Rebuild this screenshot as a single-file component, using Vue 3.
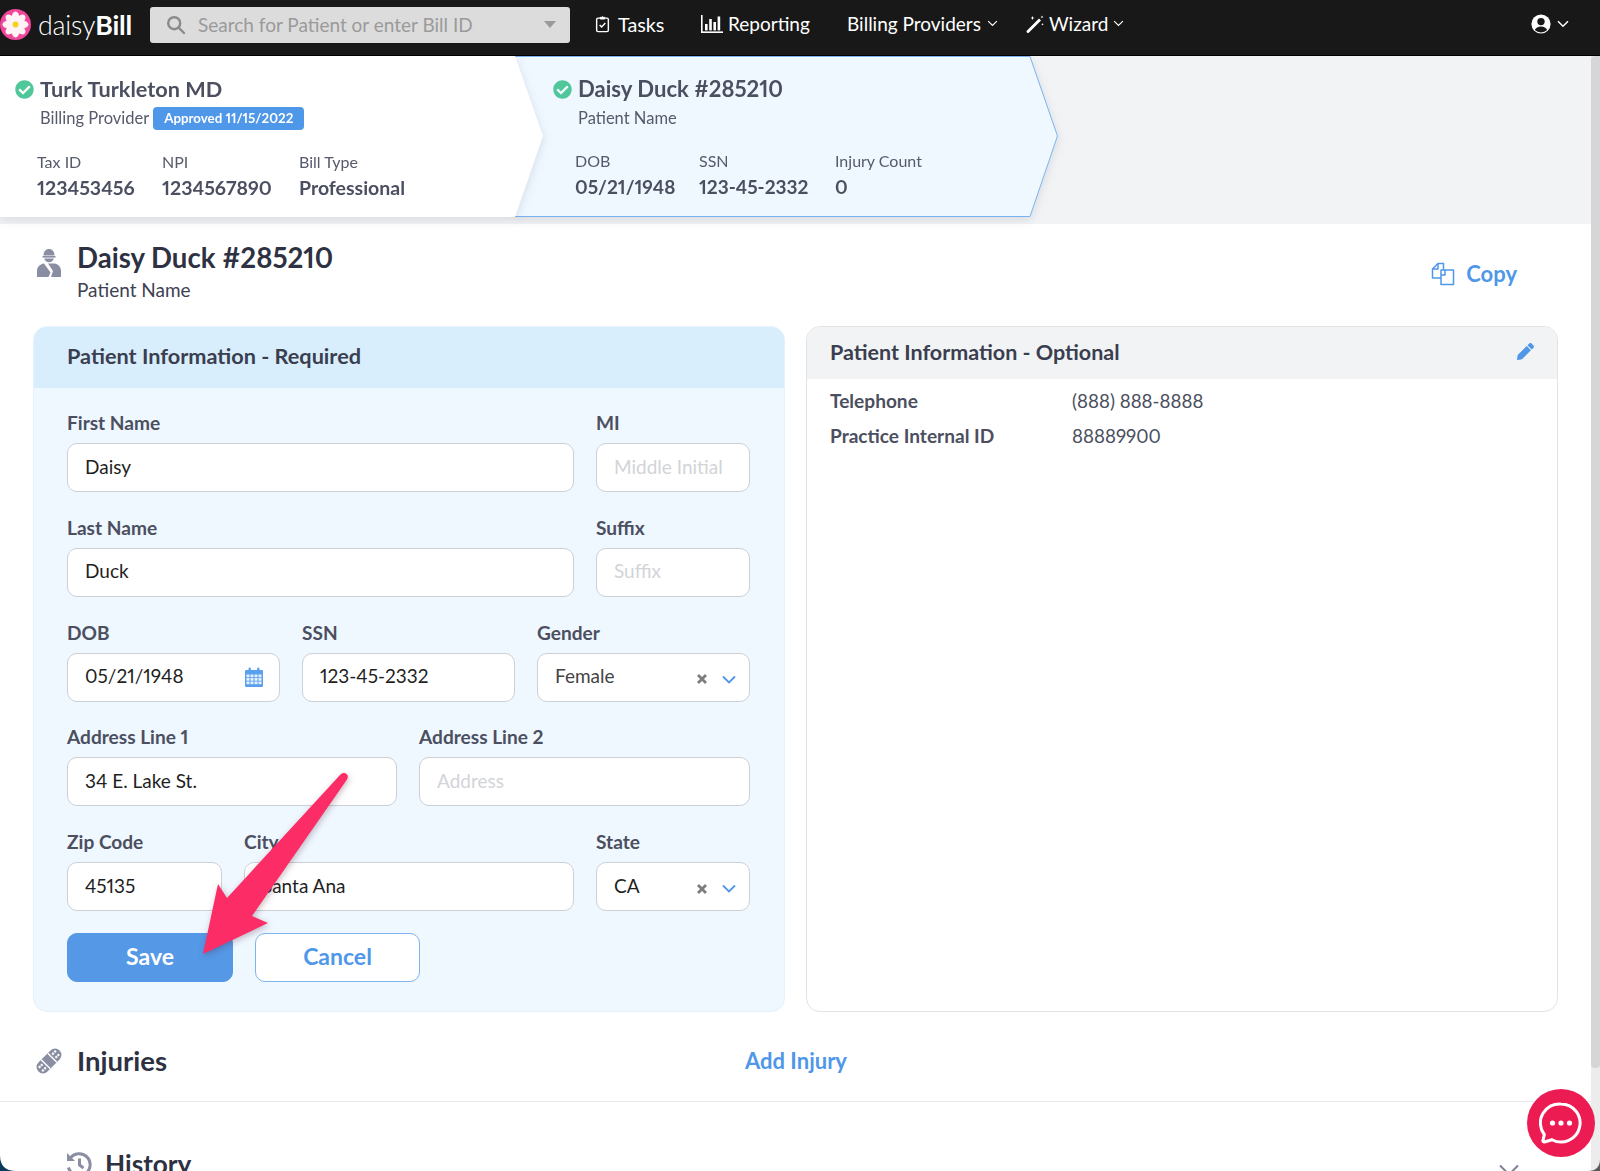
<script setup>
const checkPath = 'M504 256c0 136.967-111.033 248-248 248S8 392.967 8 256 119.033 8 256 8s248 111.033 248 248zM227.314 387.314l184-184c6.248-6.248 6.248-16.379 0-22.627l-22.627-22.627c-6.248-6.249-16.379-6.249-22.628 0L216 308.118l-70.059-70.059c-6.248-6.248-16.379-6.248-22.628 0l-22.627 22.627c-6.248 6.248-6.248 16.379 0 22.627l104 104c6.249 6.249 16.379 6.249 22.628.001z'
const tabs = [
  {
    cls: 'tab-provider', title: 'Turk Turkleton MD', sub: 'Billing Provider', badge: 'Approved 11/15/2022',
    stats: [
      { label: 'Tax ID', value: '123453456', w: 125 },
      { label: 'NPI', value: '1234567890', w: 137 },
      { label: 'Bill Type', value: 'Professional', w: 130 },
    ],
  },
  {
    cls: 'tab-patient', title: 'Daisy Duck #285210', sub: 'Patient Name',
    stats: [
      { label: 'DOB', value: '05/21/1948', w: 124 },
      { label: 'SSN', value: '123-45-2332', w: 136 },
      { label: 'Injury Count', value: '0', w: 120 },
    ],
  },
]
const rows = [
  { cls: 'r-name', fields: [
    { label: 'First Name', value: 'Daisy' },
    { label: 'MI', placeholder: 'Middle Initial' },
  ] },
  { cls: 'r-name', fields: [
    { label: 'Last Name', value: 'Duck' },
    { label: 'Suffix', placeholder: 'Suffix' },
  ] },
  { cls: 'r-three', fields: [
    { label: 'DOB', value: '05/21/1948', calendar: true },
    { label: 'SSN', value: '123-45-2332' },
    { label: 'Gender', value: 'Female', select: true, soft: true },
  ] },
  { cls: 'r-addr', fields: [
    { label: 'Address Line 1', value: '34 E. Lake St.' },
    { label: 'Address Line 2', placeholder: 'Address' },
  ] },
  { cls: 'r-city', fields: [
    { label: 'Zip Code', value: '45135' },
    { label: 'City', value: 'Santa Ana' },
    { label: 'State', value: 'CA', select: true },
  ] },
]
</script>

<template>
  <div class="app">
    <header class="nav">
      <div class="logo">
        <svg class="flower" viewBox="0 0 32 32" width="31" height="31">
          <circle cx="16" cy="16" r="16" fill="#f0479b" />
          <g fill="#fff3f6">
            <ellipse v-for="a in [0, 45, 90, 135, 180, 225, 270, 315]" :key="a" cx="16" cy="8.6" rx="3.9" ry="6" :transform="`rotate(${a} 16 16)`" />
          </g>
          <circle cx="16" cy="16" r="3" fill="#f7d21c" />
        </svg>
        <span class="brand">daisy<b>Bill</b></span>
      </div>
      <div class="search">
        <svg viewBox="0 0 20 20" width="20" height="20" fill="none" stroke="#8a8a8a" stroke-width="2.4"><circle cx="8.2" cy="8.2" r="6" /><path d="M12.6 12.6 18 18" stroke-linecap="round" /></svg>
        <span class="search-text">Search for Patient or enter Bill ID</span>
        <i class="search-caret"></i>
      </div>
      <nav class="links">
        <a class="link l-tasks">
          <svg viewBox="0 0 16 20" width="15" height="18" fill="none" stroke="#fff" stroke-width="1.6"><rect x="1.5" y="3.5" width="13" height="15" rx="1.6" /><path d="M5.5 3.5V2.6h1.4a1.2 1.2 0 0 1 2.2 0h1.4v1.9h-5z" fill="#fff" stroke-width="1" /><path d="m4.8 11 2.3 2.4 4-4.4" /></svg>
          Tasks
        </a>
        <a class="link l-report">
          <svg viewBox="0 0 22 18" width="22" height="18" fill="#fff"><rect x="0" y="0" width="1.6" height="18" /><rect x="0" y="16.4" width="22" height="1.6" /><rect x="4" y="9" width="2.6" height="6.4" /><rect x="8.2" y="4" width="2.6" height="11.4" /><rect x="12.4" y="7" width="2.6" height="8.4" /><rect x="16.6" y="1.5" width="2.6" height="13.9" /></svg>
          Reporting
        </a>
        <a class="link l-billing">
          Billing Providers
          <svg viewBox="0 0 12 8" width="11" height="7" fill="none" stroke="#fff" stroke-width="1.3"><path d="m1 1.2 5 5 5-5" /></svg>
        </a>
        <a class="link l-wizard">
          <svg viewBox="0 0 18 18" width="18" height="18" fill="#fff"><path d="M13 3.6 15 5.6 3 17.6a1.2 1.2 0 0 1-2-2z" /><path d="m6.5 1 .6 1.4L8.5 3l-1.4.6-.6 1.4-.6-1.4L4.5 3l1.4-.6zM16 .6l.4 1 1 .4-1 .4-.4 1-.4-1-1-.4 1-.4zM16.5 8l.4.9.9.4-.9.4-.4.9-.4-.9-.9-.4.9-.4z" /></svg>
          Wizard
          <svg viewBox="0 0 12 8" width="11" height="7" fill="none" stroke="#fff" stroke-width="1.3"><path d="m1 1.2 5 5 5-5" /></svg>
        </a>
      </nav>
      <div class="user">
        <svg viewBox="0 0 20 20" width="20" height="20"><circle cx="10" cy="10" r="9.6" fill="#fff" /><circle cx="10" cy="7.6" r="3.7" fill="#181818" /><path d="M3.8 16a6.6 5.4 0 0 1 12.4 0 9 9 0 0 1-12.4 0z" fill="#181818" /></svg>
        <svg viewBox="0 0 12 8" width="12" height="8" fill="none" stroke="#fff" stroke-width="1.5"><path d="m1 1.2 5 5 5-5" /></svg>
      </div>
    </header>

    <div class="below">
      <div class="page">
        <section class="tabs">
          <article v-for="tab in tabs" :key="tab.cls" class="tab" :class="tab.cls">
            <svg v-if="tab.cls === 'tab-patient'" class="tab-line" viewBox="0 0 543 161" width="543" height="161" fill="none">
              <path d="M0 .5H515L542.500 80 515 160.500H0" stroke="#79b1f1" stroke-width="1" />
            </svg>
            <div class="tab-inner">
              <div class="tab-title">
                <svg viewBox="0 0 512 512" width="19" height="19" fill="#4fc79a"><path :d="checkPath" /></svg>
                <span>{{ tab.title }}</span>
              </div>
              <div class="tab-sub">
                <span>{{ tab.sub }}</span>
                <span v-if="tab.badge" class="badge">{{ tab.badge }}</span>
              </div>
              <div class="stats">
                <div v-for="s in tab.stats" :key="s.label" class="stat" :style="{ width: s.w + 'px' }">
                  <div class="stat-label">{{ s.label }}</div>
                  <div class="stat-value">{{ s.value }}</div>
                </div>
              </div>
            </div>
          </article>
        </section>

        <section class="heading">
          <svg class="h-icon" viewBox="0 0 26 30" width="26" height="30" fill="#8a8ea3">
            <path d="M7.5 7.5C7.5 3.6 9.8 1 13 1s5.500 2.600 5.500 6.500z" />
            <path d="M6.500 8h13v1.600h-13z" />
            <path d="M8.200 10.600h9.600a5 5 0 0 1-9.600 0z" />
            <path d="M1 29v-6c0-4.500 3.500-7 7-7.500l6.500 9-2 4.500zM15 29l2-6-5-7.500h6c4.500.5 7 3.500 7 7.500v6z" />
          </svg>
          <div class="h-text">
            <h1>Daisy Duck #285210</h1>
            <p>Patient Name</p>
          </div>
          <a class="copy">
            <svg viewBox="0 0 24 24" width="24" height="24" fill="none" stroke="#4f97e8" stroke-width="1.500" stroke-linejoin="round"><path d="M10 16H1.500V7L7 1.500h5.500V8" /><path d="M1.500 7H7V1.500" /><path d="M10 8h12.500v14.500H10z" fill="#fff" /><path d="M14 8v5h-4" /></svg>
            Copy
          </a>
        </section>

        <section class="cards">
          <div class="card card-req">
            <div class="req-head">Patient Information - Required</div>
            <div class="req-body">
              <div v-for="(row, i) in rows" :key="i" class="row" :class="row.cls">
                <div v-for="f in row.fields" :key="f.label" class="field">
                  <label>{{ f.label }}</label>
                  <div class="input" :class="{ ph: f.placeholder, soft: f.soft }">
                    <span>{{ f.value || f.placeholder }}</span>
                    <svg v-if="f.calendar" class="cal" viewBox="0 0 20 20" width="20" height="20">
                      <path d="M2 3h16a1 1 0 0 1 1 1v15a1 1 0 0 1-1 1H2a1 1 0 0 1-1-1V4a1 1 0 0 1 1-1z" fill="#5aa0ee" />
                      <rect x="4.500" y="0.500" width="2.400" height="5" rx="1.200" fill="#5aa0ee" />
                      <rect x="13.100" y="0.500" width="2.400" height="5" rx="1.200" fill="#5aa0ee" />
                      <g fill="#e6f1fd">
                        <template v-for="y in [7.5, 11, 14.500]" :key="y">
                          <rect v-for="x in [2.500, 6.500, 10.500, 14.500]" :key="x" :x="x" :y="y" width="3" height="2.700" />
                        </template>
                      </g>
                    </svg>
                    <template v-if="f.select">
                      <svg class="x" viewBox="0 0 10 10" width="10" height="10" stroke="#7d7d7d" stroke-width="2.800"><path d="m1 1 8 8M9 1l-8 8" /></svg>
                      <svg class="down" viewBox="0 0 14 9" width="14" height="9" fill="none" stroke="#4f97e8" stroke-width="1.800"><path d="m1 1.500 6 6 6-6" /></svg>
                    </template>
                  </div>
                </div>
              </div>
              <div class="actions">
                <button class="btn save" type="button">Save</button>
                <button class="btn cancel" type="button">Cancel</button>
              </div>
            </div>
          </div>

          <div class="card card-opt">
            <div class="opt-head">
              <span>Patient Information - Optional</span>
              <svg viewBox="0 0 512 512" width="17" height="17" fill="#4f97e8"><path d="M497.900 142.100l-46.100 46.100c-4.700 4.700-12.300 4.700-17 0l-111-111c-4.700-4.700-4.700-12.300 0-17l46.100-46.100c18.700-18.700 49.100-18.700 67.900 0l60.100 60.100c18.800 18.700 18.800 49.100 0 67.900zM284.200 99.800L21.600 362.400.4 483.900c-2.900 16.400 11.400 30.600 27.800 27.800l121.500-21.300 262.600-262.600c4.700-4.700 4.700-12.300 0-17l-111-111c-4.800-4.700-12.400-4.700-17.100 0z" /></svg>
            </div>
            <dl class="opt-list">
              <div><dt>Telephone</dt><dd>(888) 888-8888</dd></div>
              <div><dt>Practice Internal ID</dt><dd>88889900</dd></div>
            </dl>
          </div>
        </section>

        <section class="injuries">
          <svg viewBox="0 0 28 28" width="30" height="30">
            <g transform="rotate(-45 14 14)">
              <rect x="0" y="8" width="28" height="12" rx="6" fill="#8a8ea3" />
              <rect x="9" y="8" width="1.300" height="12" fill="#fff" />
              <rect x="17.700" y="8" width="1.300" height="12" fill="#fff" />
              <g fill="#fff">
                <rect x="2.800" y="10.800" width="2" height="2" /><rect x="5.600" y="10.800" width="2" height="2" />
                <rect x="2.800" y="15.200" width="2" height="2" /><rect x="5.600" y="15.200" width="2" height="2" />
                <rect x="20.400" y="10.800" width="2" height="2" /><rect x="23.200" y="10.800" width="2" height="2" />
                <rect x="20.400" y="15.200" width="2" height="2" /><rect x="23.200" y="15.200" width="2" height="2" />
              </g>
            </g>
          </svg>
          <h2>Injuries</h2>
          <a class="add">Add Injury</a>
        </section>

        <section class="history">
          <svg viewBox="0 0 28 28" width="28" height="28" fill="none" stroke="#8a8ea3" stroke-width="3">
            <path d="M5 8.500a11 11 0 1 1-1.500 9" />
            <path d="M2 3v8h8z" fill="#8a8ea3" stroke="none" />
            <path d="M14.500 8.500V15l4 3" />
          </svg>
          <h2>History</h2>
          <svg class="hist-chev" viewBox="0 0 20 12" width="20" height="12" fill="none" stroke="#7d8296" stroke-width="2"><path d="m1 1.500 9 9 9-9" /></svg>
        </section>
      </div>
      <div class="scrollbar"><div class="thumb"></div></div>
    </div>

    <svg class="arrow" viewBox="0 0 160 200" width="160" height="200">
      <path d="M142.500 2.500C144.500.5 147.500.5 149 2.500 150.200 4 150 5.800 149 7.500L54 144 70 151 5 182 20 112 29 126z" fill="#fb2c66" />
    </svg>

    <div class="chat">
      <svg viewBox="0 0 44 44" width="44" height="44" fill="none">
        <path d="M22 3a19 19 0 1 1-9 35.700L5.500 41a1.200 1.200 0 0 1-1.500-1.500l1.300-6A19 19 0 0 1 22 3z" stroke="#fff" stroke-width="3" />
        <circle cx="13.500" cy="22" r="2.600" fill="#fff" />
        <circle cx="22" cy="22" r="2.600" fill="#fff" />
        <circle cx="30.500" cy="22" r="2.600" fill="#fff" />
      </svg>
    </div>

    <svg class="corner corner-l" viewBox="0 0 16 16" width="16" height="16"><path d="M0 0Q0 16 16 16H0z" fill="#0c3a5c" /></svg>
    <svg class="corner corner-r" viewBox="0 0 12 12" width="12" height="12"><path d="M12 0Q12 12 0 12H12z" fill="#5a5a5a" /></svg>
  </div>
</template>

<style scoped>
.app {
  position: relative;
  width: 1600px;
  height: 1171px;
  overflow: hidden;
  background: #fff;
  font-family: Lato, "Liberation Sans", sans-serif;
  font-variant-numeric: proportional-nums;
  color: #2d3142;
}
.nav {
  height: 55px;
  background: #181818;
  border-bottom: 1px solid #000;
  display: flex;
  align-items: center;
  color: #fff;
  box-sizing: content-box;
}
.logo {
  display: flex;
  align-items: center;
  width: 150px;
  flex: none;
}
.flower { margin-top: -6px; }
.brand {
  margin-left: 7px;
  margin-top: -6px;
  font-size: 26.8px;
  font-weight: 300;
  color: #fff;
  letter-spacing: -0.2px;
}
.brand b { font-weight: 700; }
.search {
  width: 420px;
  height: 36px;
  margin-top: -6px;
  background: #dcdcdc;
  border-radius: 3px;
  display: flex;
  align-items: center;
  padding: 0 14px 0 16px;
  box-sizing: border-box;
  flex: none;
}
.search-text {
  margin-left: 12px;
  font-size: 19px;
  color: #9a9a9a;
  flex: 1;
  white-space: nowrap;
}
.search-caret {
  width: 0;
  height: 0;
  border-left: 6px solid transparent;
  border-right: 6px solid transparent;
  border-top: 7px solid #9a9a9a;
}
.links {
  display: flex;
  align-items: center;
  margin-top: -8px;
  margin-left: 25px;
  font-size: 19px;
}
.link {
  display: flex;
  align-items: center;
  white-space: nowrap;
}
.l-tasks { gap: 8px; width: 106px; font-size: 19.8px; }
.l-report { gap: 5px; width: 147px; }
.l-billing { gap: 6px; width: 180px; margin-left: -1px; }
.l-wizard { gap: 5px; margin-left: -1px; }
.user {
  margin-left: auto;
  margin-right: 31px;
  margin-top: -8px;
  display: flex;
  align-items: center;
  gap: 6px;
}
.below {
  display: flex;
  height: 1115px;
}
.page {
  width: 1591px;
  flex: none;
  overflow: hidden;
}
.scrollbar {
  width: 9px;
  flex: none;
  background: #ececec;
}
.thumb {
  height: 1012px;
  background: #d6d6d6;
  border-radius: 4px 0 4px 4px;
}
.tabs {
  height: 168px;
  background: #f2f3f5;
  display: flex;
  align-items: flex-start;
}
.tab {
  position: relative;
  width: 543px;
  height: 161px;
  flex: none;
  box-sizing: border-box;
  filter: drop-shadow(0 3px 5px rgba(60, 70, 90, 0.14));
}
.tab-provider {
  z-index: 2;
}
.tab-provider .tab-inner {
  background: #fff;
  clip-path: polygon(0 0, 515px 0, 543px 80px, 515px 161px, 0 161px);
  padding: 23px 0 0 37px;
}
.tab-patient {
  z-index: 1;
  margin-left: -28px;
}
.tab-patient .tab-inner {
  background: #eff7ff;
  clip-path: polygon(0 0, 515px 0, 543px 80px, 515px 161px, 0 161px);
  padding: 23px 0 0 60px;
}
.tab-inner {
  height: 161px;
  box-sizing: border-box;
}
.tab-line {
  position: absolute;
  left: 0;
  top: 0;
  z-index: 2;
}
.tab-title {
  display: flex;
  align-items: center;
  gap: 6px;
  margin-left: -22px;
  font-size: 21.7px;
  line-height: 20px;
  font-weight: 700;
  color: #4b4f60;
  height: 20px;
}
.tab-patient .tab-title { font-size: 22.1px; }
.tab-sub {
  display: flex;
  align-items: center;
  margin: 7px 0 0 3px;
  font-size: 16.5px;
  color: #565a6b;
  height: 24px;
}
.badge {
  margin-left: 4px;
  background: #4f97e8;
  color: #fff;
  font-size: 13.3px;
  font-weight: 700;
  height: 23px;
  line-height: 23px;
  padding: 0 11px;
  border-radius: 4px;
}
.stats {
  display: flex;
  margin-top: 22px;
}
.tab-patient .stats { margin-top: 21px; }
.stat-label {
  font-size: 16px;
  line-height: 20px;
  color: #565a6b;
}
.stat-value {
  margin-top: 6px;
  font-size: 19.5px;
  line-height: 20px;
  font-weight: 700;
  color: #4b4f60;
  white-space: nowrap;
}
.tab-patient .stat-value { font-size: 19px; }
.heading {
  display: flex;
  height: 102px;
  box-sizing: border-box;
  padding: 19px 74px 0 36px;
  align-items: flex-start;
}
.h-icon { margin-top: 5px; flex: none; }
.h-text { margin-left: 15px; }
.h-text h1 {
  margin: 0;
  font-size: 27.6px;
  line-height: 30px;
  font-weight: 700;
  color: #2d3142;
}
.h-text p {
  margin: 7px 0 0;
  font-size: 19px;
  line-height: 20px;
  color: #3d4152;
}
.copy {
  margin-left: auto;
  margin-top: 17px;
  display: flex;
  align-items: center;
  gap: 11px;
  font-size: 22px;
  font-weight: 700;
  color: #4f97e8;
}
.cards {
  display: flex;
  gap: 21px;
  padding: 0 33px;
  height: 686px;
}
.card {
  width: 752px;
  flex: none;
  box-sizing: border-box;
  border-radius: 14px;
  overflow: hidden;
}
.card-req {
  background: #eff7ff;
  border: 1px solid #e5f1fc;
}
.req-head {
  height: 61px;
  box-sizing: border-box;
  padding: 0 0 4px 33px;
  background: #d9eefd;
  display: flex;
  align-items: center;
  font-size: 21.7px;
  font-weight: 700;
  color: #3a3e4f;
}
.req-body {
  padding: 25px 33px 0;
}
.row {
  display: grid;
  column-gap: 22px;
  margin-bottom: 25.75px;
}
.r-name { grid-template-columns: 507px 154px; }
.r-three { grid-template-columns: 213px 213px 213px; }
.r-addr { grid-template-columns: 330px 331px; }
.r-city { grid-template-columns: 155px 330px 154px; margin-bottom: 22px; }
.field label {
  display: block;
  height: 20px;
  line-height: 20px;
  margin-bottom: 10px;
  font-size: 19.1px;
  font-weight: 700;
  color: #4b4f60;
}
.input {
  height: 49px;
  box-sizing: border-box;
  background: #fff;
  border: 1px solid #cdd0d4;
  border-radius: 10px;
  padding: 0 17px;
  display: flex;
  align-items: center;
  font-size: 19px;
  color: #1f1f1f;
}
.input span { flex: 1; white-space: nowrap; padding-bottom: 3px; }
.input.ph { color: #d2d4d8; }
.input.soft { color: #444; }
.cal { margin-right: -2px; }
.x { margin-right: 15px; margin-top: 4px; }
.down { margin-right: -4px; margin-top: 4px; }
.actions {
  display: flex;
  gap: 22px;
}
.btn {
  height: 49px;
  border-radius: 10px;
  font-family: inherit;
  font-size: 23px;
  font-weight: 700;
  box-sizing: border-box;
  padding: 0 0 3px;
}
.save {
  width: 166px;
  background: #5598e6;
  border: 1px solid #5598e6;
  color: #fff;
}
.cancel {
  width: 165px;
  background: #fff;
  border: 1px solid #7fb4f0;
  color: #4f97e8;
}
.card-opt {
  background: #fff;
  border: 1px solid #e3e3e6;
}
.opt-head {
  height: 52px;
  box-sizing: border-box;
  background: #f2f3f5;
  display: flex;
  align-items: center;
  justify-content: space-between;
  padding: 0 23px 3px;
  font-size: 21.5px;
  font-weight: 700;
  color: #3a3e4f;
}
.opt-list { margin: 4px 0 0; padding: 0 23px; }
.opt-list div {
  display: flex;
  height: 35px;
  align-items: center;
  font-size: 18.7px;
}
.opt-list dt {
  width: 242px;
  font-size: 19.1px;
  font-weight: 700;
  color: #4b4f60;
}
.opt-list dd {
  margin: 0;
  color: #4b4f60;
}
.injuries {
  display: flex;
  align-items: center;
  height: 90px;
  box-sizing: border-box;
  padding: 8px 0 0 34px;
  border-bottom: 1px solid #e8e9eb;
}
.injuries h2 {
  margin: 0 0 0 13px;
  font-size: 27.5px;
  font-weight: 700;
  color: #2d3142;
  width: 668px;
}
.add {
  font-size: 22px;
  font-weight: 700;
  color: #4f97e8;
}
.history {
  display: flex;
  align-items: center;
  padding: 47px 0 0 65px;
}
.history h2 {
  margin: 0 0 0 12px;
  font-size: 26.2px;
  line-height: 30px;
  font-weight: 700;
  color: #2d3142;
}
.hist-chev {
  margin-left: auto;
  margin-right: 72px;
  margin-top: 12px;
}
.arrow {
  position: absolute;
  left: 198px;
  top: 772px;
  filter: drop-shadow(1px 2px 3px rgba(70, 30, 50, 0.3));
}
.chat {
  position: absolute;
  left: 1527px;
  top: 1089px;
  width: 68px;
  height: 68px;
  border-radius: 50%;
  background: #ec1c53;
  display: flex;
  align-items: center;
  justify-content: center;
}
.corner { position: absolute; bottom: 0; }
.corner-l { left: 0; }
.corner-r { right: 0; }
</style>

<style>
html, body { margin: 0; overflow: hidden; background: #fff; }
</style>
